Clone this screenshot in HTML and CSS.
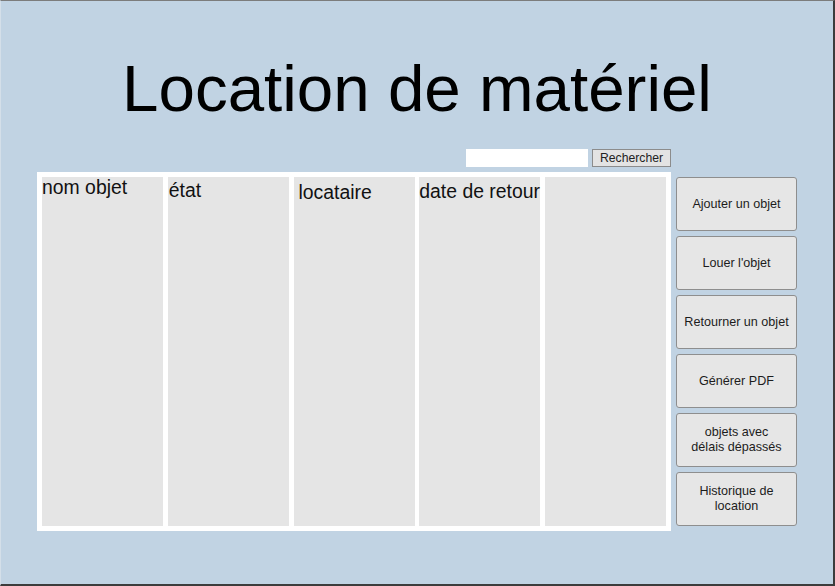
FILE: index.html
```html
<!DOCTYPE html>
<html lang="fr">
<head>
<meta charset="utf-8">
<title>Location de matériel</title>
<link rel="stylesheet" href="styles.css">
</head>
<body>
<div class="window">
  <h1 class="title">Location de matériel</h1>
  <div class="content">
    <div class="main">
      <div class="search">
        <input class="search-input" type="text">
        <button class="search-btn">Rechercher</button>
      </div>
      <div class="table">
        <div class="col"><span class="head h1">nom objet</span></div>
        <div class="col"><span class="head h2">état</span></div>
        <div class="col"><span class="head h3">locataire</span></div>
        <div class="col"><span class="head h4">date de retour</span></div>
        <div class="col"></div>
      </div>
    </div>
    <div class="actions">
      <button class="action">Ajouter un objet</button>
      <button class="action">Louer l'objet</button>
      <button class="action">Retourner un objet</button>
      <button class="action">Générer PDF</button>
      <button class="action">objets avec<br>délais dépassés</button>
      <button class="action">Historique de<br>location</button>
    </div>
  </div>
</div>
</body>
</html>
```

FILE: styles.css
```css
* { box-sizing: border-box; }
html, body { margin: 0; padding: 0; }
body { font-family: "Liberation Sans", Arial, sans-serif; }

.window {
  width: 835px;
  height: 586px;
  background: #c1d3e3;
  border-top: 1px solid #7c7c7c;
  border-left: 1px solid #d4dfe9;
  border-right: 2px solid #3c3c3c;
  border-bottom: 2px solid #3c3c3c;
  padding-top: 50px;
}

.title {
  margin: 0;
  font-weight: normal;
  font-size: 65.5px;
  line-height: 76px;
  text-align: center;
  color: #000;
}

.content {
  display: flex;
  gap: 5px;
  margin-top: 22px;
  padding-left: 36px;
}

.main {
  width: 634px;
  display: flex;
  flex-direction: column;
  gap: 5px;
}

.search {
  display: flex;
  justify-content: flex-end;
  gap: 4px;
  height: 18px;
}

.search-input {
  width: 122px;
  height: 18px;
  border: none;
  background: #fff;
  margin: 0;
  padding: 0 2px;
}

.search-btn {
  width: 79px;
  height: 18px;
  margin: 0;
  padding: 0;
  border: 1px solid #8c8c8c;
  background: #e3e3e3;
  font-family: "Liberation Sans", Arial, sans-serif;
  font-size: 12.2px;
  color: #222;
  line-height: 16px;
}

.table {
  height: 359px;
  background: #fff;
  padding: 5px;
  display: flex;
  gap: 4.75px;
}

.col {
  flex: 1;
  min-width: 0;
  background: #e5e5e5;
}

.head {
  display: block;
  font-size: 19.4px;
  line-height: 22px;
  color: #111;
  white-space: nowrap;
}
.h1 { margin-top: -1.5px; padding-left: 0; }
.h2 { padding-top: 1.5px; padding-left: 1px; }
.h3 { padding-top: 3.5px; padding-left: 5px; }
.h4 { padding-top: 2.5px; padding-left: 0; }

.actions {
  width: 121px;
  display: flex;
  flex-direction: column;
  gap: 5px;
  padding-top: 28px;
}

.action {
  height: 54px;
  margin: 0;
  padding: 0 4px;
  border: 1px solid #8e8e8e;
  border-radius: 3px;
  background: #e6e6e6;
  font-family: "Liberation Sans", Arial, sans-serif;
  font-size: 12.6px;
  line-height: 15px;
  color: #1c1c1c;
  text-align: center;
}
```
